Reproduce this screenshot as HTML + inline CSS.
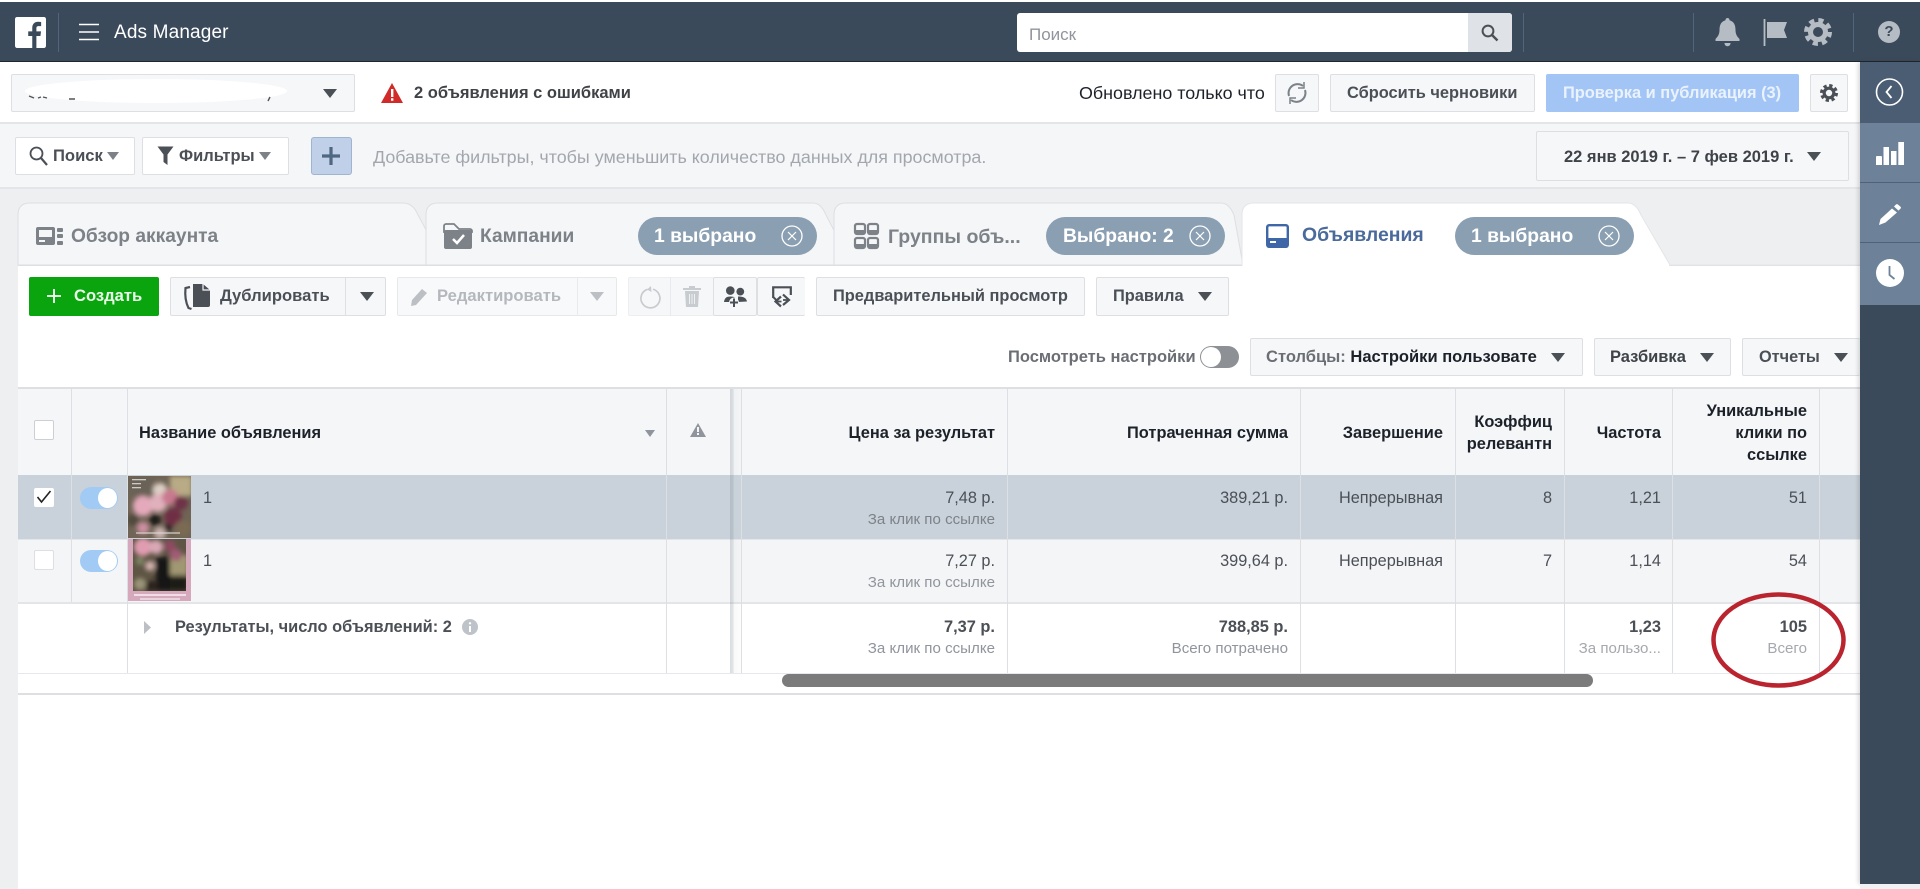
<!DOCTYPE html>
<html lang="ru"><head><meta charset="utf-8"><title>Ads Manager</title>
<style>
html,body{margin:0;padding:0;width:1920px;height:889px;overflow:hidden;background:#fff}
body{position:relative;font-family:"Liberation Sans",Arial,sans-serif;color:#4b4f56}
div,svg{position:absolute;box-sizing:border-box}
svg{display:block;overflow:visible}
.t{white-space:nowrap;line-height:20px;font-size:16px;transform:translateY(1px)}
.r{text-align:right}
.bd{font-weight:700}
.b{background:#f6f7f9;border:1px solid #dddfe2;border-radius:2px}
.a{width:0;height:0;border-left:7px solid transparent;border-right:7px solid transparent;border-top:9px solid #4b4f56}
.v{background:#dddfe2;width:1px}
.h{font-weight:700;color:#1d2129;font-size:16.4px}
.c{color:#4b4f56;font-size:16.3px}
.u{color:#90949c;font-size:15.1px}
.m{font-size:16.4px;color:#4b4f56}
.tb{font-weight:700;font-size:19.2px;color:#7d8288}
.pl{background:#8b9fb3;height:38px;top:217px;border-radius:19px}
.pt{color:#fff;font-weight:700;font-size:19.3px}
</style></head><body>

<!-- header -->
<div style="left:0;top:0;width:1920px;height:62px;background:#3b4a5a;border-top:2px solid #fff;border-bottom:1px solid #20262d"></div>
<svg style="left:15px;top:17px" width="31" height="31" viewBox="0 0 30 30"><rect width="30" height="30" rx="2" fill="#fff"/><path d="M20.7 30V18.4h3.9l.6-4.5h-4.5V11c0-1.3.4-2.2 2.2-2.2h2.4v-4a32 32 0 0 0-2.8-.2c-3.5 0-5.8 2.1-5.8 6v3.3h-3.9v4.5h3.9V30z" fill="#3b4a5a"/></svg>
<div style="left:58px;top:13px;width:1px;height:39px;background:#53657a"></div>
<svg style="left:79px;top:23px" width="20" height="18"><path d="M0 1.500h20M0 9h20M0 16.500h20" stroke="#fff" stroke-width="1.600"/></svg>
<div class="t" style="left:114px;top:22px;color:#fff;font-size:19px;letter-spacing:.15px">Ads Manager</div>
<div style="left:1017px;top:13px;width:495px;height:39px;background:#fff;border-radius:3px"></div>
<div style="left:1468px;top:13px;width:44px;height:39px;background:#dfe2e6;border-radius:0 3px 3px 0"></div>
<div class="t" style="left:1029px;top:24px;color:#90949c;font-size:17px">Поиск</div>
<svg style="left:1481px;top:24px" width="18" height="18"><circle cx="7" cy="7" r="5.400" fill="none" stroke="#4b4f56" stroke-width="2"/><path d="M11 11l5.500 5.500" stroke="#4b4f56" stroke-width="2.400"/></svg>
<div style="left:1523px;top:13px;width:1px;height:39px;background:#53657a"></div>
<div style="left:1693px;top:13px;width:1px;height:39px;background:#53657a"></div>
<div style="left:1853px;top:13px;width:1px;height:39px;background:#53657a"></div>
<svg style="left:1715px;top:18px" width="25" height="29" viewBox="0 0 25 29"><path d="M12.500 0c1.300 0 2 .9 2 2.200C19 3.500 20.500 7 20.500 12c0 4 1.500 6.500 4 9v2H.5v-2c2.500-2.500 4-5 4-9 0-5 1.500-8.500 6-9.800C10.500.9 11.200 0 12.500 0z" fill="#b6bcc4"/><path d="M9.500 25h6c0 2-1.300 3.200-3 3.200s-3-1.200-3-3.200z" fill="#b6bcc4"/></svg>
<svg style="left:1763px;top:19px" width="24" height="27" viewBox="0 0 24 27"><path d="M1.500 0v27" stroke="#b6bcc4" stroke-width="1.800"/><path d="M4 3h20l-3 8 3 8H4z" fill="#b6bcc4"/></svg>
<svg style="left:1804px;top:18px" width="28" height="28" viewBox="0 0 28 28"><circle cx="14" cy="14" r="11.500" fill="none" stroke="#b6bcc4" stroke-width="5" stroke-dasharray="5 4.030"/><circle cx="14" cy="14" r="7.500" fill="none" stroke="#b6bcc4" stroke-width="5"/></svg>
<div style="left:1878px;top:21px;width:22px;height:22px;border-radius:50%;background:#b6bcc4"></div>
<div class="t bd" style="left:1878px;top:21px;width:22px;text-align:center;color:#3b4a5a;font-size:15px">?</div>

<!-- account row -->
<div style="left:0;top:62px;width:1860px;height:62px;background:#fff;border-bottom:2px solid #e3e5e8"></div>
<div class="b" style="left:11px;top:74px;width:344px;height:38px"></div>
<svg style="left:25px;top:78px" width="262" height="26"><ellipse cx="131" cy="13" rx="131" ry="12" fill="#fff"/><path d="M4 18l5 2M13 20l3-1M18 19l4 1M44 21h6M245 19l-2 4" stroke="#555" stroke-width="1.400"/></svg>
<div class="a" style="left:323px;top:89px"></div>
<svg style="left:381px;top:83px" width="22" height="20" viewBox="0 0 22 20"><path d="M11 0l11 20H0z" fill="#d02b28"/><path d="M10 6h2.400v8H10zM10 15.200h2.400v2.500H10z" fill="#fff"/></svg>
<div class="t bd" style="left:414px;top:82px;font-size:16.5px;color:#3f4348">2 объявления с ошибками</div>
<div class="t" style="left:1079px;top:82px;color:#1d2129;font-size:17.9px">Обновлено только что</div>
<div class="b" style="left:1275px;top:74px;width:44px;height:38px"></div>
<svg style="left:1285px;top:81px" width="24" height="24" viewBox="0 0 24 24"><path d="M4 15A9 9 0 0 1 18 5M20 9a9 9 0 0 1-14 10" fill="none" stroke="#7d8288" stroke-width="2"/><path d="M19 1v6h-6M5 23v-6h6" fill="none" stroke="#7d8288" stroke-width="1.500"/></svg>
<div class="b" style="left:1330px;top:74px;width:205px;height:38px"></div>
<div class="t bd m" style="left:1347px;top:82px">Сбросить черновики</div>
<div style="left:1546px;top:74px;width:253px;height:38px;background:#a3c5f6;border-radius:2px"></div>
<div class="t bd" style="left:1563px;top:82px;font-size:16.4px;color:#eaf2fd">Проверка и публикация (3)</div>
<div class="b" style="left:1810px;top:74px;width:38px;height:38px"></div>
<svg style="left:1820px;top:84px" width="18" height="18" viewBox="0 0 28 28"><circle cx="14" cy="14" r="11.500" fill="none" stroke="#4b4f56" stroke-width="5" stroke-dasharray="5 4.030"/><circle cx="14" cy="14" r="7.500" fill="none" stroke="#4b4f56" stroke-width="5"/></svg>

<!-- filter row -->
<div style="left:0;top:124px;width:1860px;height:65px;background:#f5f6f8;border-bottom:2px solid #e3e5e8"></div>
<div class="b" style="left:15px;top:137px;width:120px;height:38px;background:#fff"></div>
<svg style="left:29px;top:146px" width="19" height="20"><circle cx="7.500" cy="7.500" r="6" fill="none" stroke="#4b4f56" stroke-width="1.800"/><path d="M12 12l6 7" stroke="#4b4f56" stroke-width="2.200"/></svg>
<div class="t bd" style="left:53px;top:145px;font-size:16.6px">Поиск</div>
<div class="a" style="left:107px;top:152px;border-left-width:6px;border-right-width:6px;border-top-width:8px;border-top-color:#7d8288"></div>
<div class="b" style="left:142px;top:137px;width:147px;height:38px;background:#fff"></div>
<svg style="left:157px;top:146px" width="17" height="19"><path d="M.5 .5h16L10.500 8.500V19l-4-3V8.500z" fill="#4b4f56"/></svg>
<div class="t bd" style="left:179px;top:145px;font-size:16.5px">Фильтры</div>
<div class="a" style="left:259px;top:152px;border-left-width:6px;border-right-width:6px;border-top-width:8px;border-top-color:#7d8288"></div>
<div style="left:311px;top:137px;width:41px;height:38px;background:#bfd0e8;border:1px solid #9fb4d0;border-radius:3px"></div>
<svg style="left:322px;top:147px" width="18" height="18"><path d="M9 0v18M0 9h18" stroke="#4f6782" stroke-width="3.200"/></svg>
<div class="t" style="left:373px;top:146px;color:#a3a7ad;font-size:17.9px">Добавьте фильтры, чтобы уменьшить количество данных для просмотра.</div>
<div class="b" style="left:1536px;top:131px;width:313px;height:50px"></div>
<div class="t bd" style="left:1564px;top:146px;color:#3f4348;font-size:16.5px">22 янв 2019 г. – 7 фев 2019 г.</div>
<div class="a" style="left:1807px;top:152px"></div>

<!-- tab area -->
<div style="left:0;top:189px;width:1860px;height:700px;background:#edeff1"></div>
<div style="left:18px;top:265px;width:1842px;height:624px;background:#fff;border-top:1px solid #dddfe2"></div>

<svg style="left:18px;top:203px" width="1842" height="63" viewBox="0 0 1842 63">
<path d="M0 62V12Q0 0 12 0H385Q395 0 400 12L427 62z" fill="#f5f6f8" stroke="#dddfe2"/>
<path d="M408 62V12Q408 0 420 0H795Q803 0 808 12L834 62z" fill="#f5f6f8" stroke="#dddfe2"/>
<path d="M816 62V12Q816 0 828 0H1203Q1211 0 1216 12L1225 62z" fill="#f5f6f8" stroke="#dddfe2"/>
<path d="M1224 63V12Q1224 0 1236 0H1610Q1618 0 1623 12L1652 62H1842" fill="#fff" stroke="#e3e5e8"/>
<path d="M1225 62.500H1651" stroke="#fff" stroke-width="2"/>
</svg>

<!-- tab 1 -->
<svg style="left:36px;top:226px" width="27" height="20" viewBox="0 0 27 20"><path d="M2 1h15a2 2 0 0 1 2 2v14a2 2 0 0 1-2 2H2a2 2 0 0 1-2-2V3a2 2 0 0 1 2-2z" fill="#7d8288"/><rect x="3" y="4" width="13" height="7" fill="#f5f6f8"/><rect x="3" y="14" width="6" height="2" fill="#f5f6f8"/><rect x="21" y="2" width="6" height="4" rx="1" fill="#7d8288"/><rect x="21" y="8" width="6" height="4" rx="1" fill="#7d8288"/><rect x="21" y="15" width="6" height="4" rx="1" fill="#7d8288"/></svg>
<div class="t tb" style="left:71px;top:226px">Обзор аккаунта</div>
<!-- tab 2 -->
<svg style="left:444px;top:224px" width="28" height="25" viewBox="0 0 28 25"><path d="M0 8V2a2 2 0 0 1 2-2h8l5 5h11a2 2 0 0 1 2 2v1z" fill="none" stroke="#7d8288" stroke-width="1.800"/><rect y="6" width="28" height="19" rx="2" fill="#7d8288"/><path d="M9 15l4 4 7-8" fill="none" stroke="#fff" stroke-width="2.500"/></svg>
<div class="t tb" style="left:480px;top:226px">Кампании</div>
<div class="pl" style="left:638px;width:179px"></div>
<div class="t pt" style="left:654px;top:226px">1 выбрано</div>
<svg style="left:781px;top:225px" width="22" height="22"><circle cx="11" cy="11" r="10" fill="none" stroke="#fff" stroke-width="1.300"/><path d="M7 7l8 8M15 7l-8 8" stroke="#fff" stroke-width="1.200"/></svg>
<!-- tab 3 -->
<svg style="left:854px;top:223px" width="25" height="26" viewBox="0 0 25 26"><g fill="none" stroke="#7d8288" stroke-width="2.200"><rect x="1" y="1" width="10" height="10" rx="2"/><rect x="14" y="1" width="10" height="10" rx="2"/><rect x="1" y="15" width="10" height="10" rx="2"/><rect x="14" y="15" width="10" height="10" rx="2"/></g><path d="M1 21h10v3H1zM14 21h10v3H14zM1 7h10v3H1zM14 7h10v3H14z" fill="#7d8288"/></svg>
<div class="t tb" style="left:888px;top:226px;font-size:19.5px">Группы объ...</div>
<div class="pl" style="left:1046px;width:179px"></div>
<div class="t pt" style="left:1063px;top:226px">Выбрано: 2</div>
<svg style="left:1189px;top:225px" width="22" height="22"><circle cx="11" cy="11" r="10" fill="none" stroke="#fff" stroke-width="1.300"/><path d="M7 7l8 8M15 7l-8 8" stroke="#fff" stroke-width="1.200"/></svg>
<!-- tab 4 -->
<svg style="left:1266px;top:224px" width="23" height="24" viewBox="0 0 23 24"><rect x="1.200" y="1.200" width="20.600" height="21.600" rx="2" fill="none" stroke="#3f67a8" stroke-width="2.400"/><rect x="1" y="14" width="21" height="9" rx="1" fill="#3f67a8"/><rect x="4" y="17" width="6" height="2" fill="#fff"/></svg>
<div class="t tb" style="left:1302px;top:224px;color:#4a6a9c;font-size:19.4px">Объявления</div>
<div class="pl" style="left:1455px;width:179px"></div>
<div class="t pt" style="left:1471px;top:226px">1 выбрано</div>
<svg style="left:1598px;top:225px" width="22" height="22"><circle cx="11" cy="11" r="10" fill="none" stroke="#fff" stroke-width="1.300"/><path d="M7 7l8 8M15 7l-8 8" stroke="#fff" stroke-width="1.200"/></svg>

<!-- toolbar -->
<div style="left:29px;top:277px;width:130px;height:39px;background:#0aa50e;border-radius:2px"></div>
<svg style="left:47px;top:289px" width="14" height="14"><path d="M7 0v14M0 7h14" stroke="#fff" stroke-width="1.800"/></svg>
<div class="t bd" style="left:74px;top:285px;color:#eaffea;font-size:16.6px">Создать</div>
<div class="b" style="left:170px;top:277px;width:216px;height:39px"></div>
<div class="v" style="left:345px;top:277px;height:39px"></div>
<svg style="left:184px;top:284px" width="27" height="25" viewBox="0 0 27 25"><path d="M9 0h10l7 6v15a2 2 0 0 1-2 2H9z" fill="#4b4f56"/><path d="M19 0v6h7" fill="none" stroke="#f6f7f9" stroke-width="1.200"/><path d="M6 3L1.500 4c-.8 8 0 14 3 20l3 1" fill="none" stroke="#4b4f56" stroke-width="2.200"/></svg>
<div class="t bd" style="left:220px;top:285px;font-size:16.6px;color:#4b4f56">Дублировать</div>
<div class="a" style="left:360px;top:292px"></div>
<div class="b" style="left:397px;top:277px;width:220px;height:39px;opacity:.7"></div>
<div style="left:577px;top:277px;width:1px;height:39px;background:#e8eaed"></div>
<svg style="left:410px;top:288px" width="18" height="18"><path d="M12 1l5 4L6 17l-5 1 1-6z" fill="#bcc0c4"/></svg>
<div class="t bd" style="left:437px;top:285px;font-size:16.6px;color:#b4b8bd">Редактировать</div>
<div class="a" style="left:590px;top:292px;border-top-color:#bcc0c4"></div>
<div style="left:628px;top:277px;width:86px;height:39px;background:#f6f7f9;border:1px solid #eceef0;border-radius:2px"></div>
<div style="left:670px;top:277px;width:1px;height:39px;background:#e8eaed"></div>
<svg style="left:640px;top:286px" width="20" height="22" viewBox="0 0 20 22"><path d="M7.500 3.300A9.500 9.500 0 1 0 13 3.200" fill="none" stroke="#c8cbcf" stroke-width="1.700"/><path d="M11 0L7 3.500l4.500 2.500z" fill="#c8cbcf"/></svg>
<svg style="left:683px;top:285px" width="18" height="22" viewBox="0 0 18 22"><path d="M0 4h18" stroke="#c8cbcf" stroke-width="2"/><path d="M6 3.500V1h6v2.500" fill="#c8cbcf"/><path d="M2 6h14l-1 16H3z" fill="#c8cbcf"/><path d="M6.500 9v10M9 9v10M11.500 9v10" stroke="#eef0f2"/></svg>
<div class="b" style="left:713px;top:277px;width:44px;height:39px"></div>
<div class="b" style="left:757px;top:277px;width:48px;height:39px;border-right:0"></div>
<svg style="left:724px;top:286px" width="23" height="22" viewBox="0 0 23 22"><circle cx="6.300" cy="4.600" r="4.300" fill="#4b4f56"/><circle cx="16.300" cy="5.600" r="3.900" fill="#4b4f56"/><path d="M0 16c.5-4 2.500-5.500 6.500-5.500s6 1.500 6.500 5.500z" fill="#4b4f56"/><path d="M14 10.500c5 0 8 1 9 5l-9 .5z" fill="#4b4f56"/><circle cx="10" cy="16.500" r="5" fill="#f6f7f9"/><path d="M10 12.500v8.500M6 16.500h8" stroke="#4b4f56" stroke-width="2"/></svg>
<svg style="left:772px;top:286px" width="20" height="22" viewBox="0 0 20 22"><path d="M1.200 12V1.300h17.600V9" fill="none" stroke="#4b4f56" stroke-width="2.200"/><path d="M1.200 11l4 4" stroke="#4b4f56" stroke-width="2"/><path d="M9 10.500l-5.500 5 5.500 5M11 8.500l6 5.500-6 5" fill="none" stroke="#4b4f56" stroke-width="2.200"/><path d="M4 15.500h5.500M11 14h6" stroke="#4b4f56" stroke-width="1.800"/></svg>
<div class="b" style="left:816px;top:277px;width:269px;height:39px"></div>
<div class="t bd m" style="left:833px;top:285px">Предварительный просмотр</div>
<div class="b" style="left:1096px;top:277px;width:133px;height:39px"></div>
<div class="t bd m" style="left:1113px;top:285px">Правила</div>
<div class="a" style="left:1198px;top:292px"></div>

<!-- view row -->
<div class="t bd" style="left:1008px;top:346px;font-size:16.5px;color:#6b6f75">Посмотреть настройки</div>
<div style="left:1200px;top:346px;width:39px;height:22px;border-radius:11px;background:#8d9095"></div>
<div style="left:1201px;top:347px;width:20px;height:20px;border-radius:50%;background:#fff"></div>
<div class="b" style="left:1250px;top:338px;width:333px;height:38px"></div>
<div class="t bd" style="left:1266px;top:346px;font-size:16.55px;color:#6b6f75">Столбцы: <span style="color:#1d2129">Настройки пользовате</span></div>
<div class="a" style="left:1551px;top:353px"></div>
<div class="b" style="left:1594px;top:338px;width:137px;height:38px"></div>
<div class="t bd" style="left:1610px;top:346px;font-size:16.5px;color:#3f4348">Разбивка</div>
<div class="a" style="left:1700px;top:353px"></div>
<div class="b" style="left:1742px;top:338px;width:118px;height:38px;border-right:0"></div>
<div class="t bd" style="left:1759px;top:346px;font-size:16.3px;color:#4b4f56">Отчеты</div>
<div class="a" style="left:1834px;top:353px"></div>

<!-- table rows -->
<div style="left:18px;top:387px;width:1842px;height:2px;background:#dddfe2"></div>
<div style="left:18px;top:389px;width:1842px;height:86px;background:#f5f6f8"></div>
<div style="left:18px;top:475px;width:1842px;height:64px;background:#c9d2da"></div>
<div style="left:18px;top:539px;width:1842px;height:63px;background:#f4f5f7;border-top:1px solid #e3e5e8"></div>
<div style="left:18px;top:602px;width:1842px;height:2px;background:#e3e5e8"></div>
<div style="left:18px;top:673px;width:1842px;height:1px;background:#e6e8eb"></div>
<div style="left:18px;top:693px;width:1842px;height:2px;background:#dddfe2"></div>

<!-- column lines -->
<div class="v" style="left:71px;top:389px;height:213px"></div>
<div class="v" style="left:127px;top:389px;height:284px"></div>
<div class="v" style="left:666px;top:389px;height:284px"></div>
<div class="v" style="left:1007px;top:389px;height:284px"></div>
<div class="v" style="left:1300px;top:389px;height:284px"></div>
<div class="v" style="left:1455px;top:389px;height:284px"></div>
<div class="v" style="left:1564px;top:389px;height:284px"></div>
<div class="v" style="left:1672px;top:389px;height:284px"></div>
<div class="v" style="left:1819px;top:389px;height:284px"></div>
<div style="left:730px;top:389px;width:11px;height:284px;background:linear-gradient(90deg,rgba(130,140,150,.3) 0,rgba(130,140,150,.22) 30%,rgba(200,205,210,.12) 36%,rgba(220,222,226,.05) 100%)"></div>
<div class="v" style="left:741px;top:389px;height:284px"></div>

<!-- header cells -->
<div style="left:34px;top:420px;width:20px;height:20px;background:#fff;border:1px solid #ccd0d5;border-radius:2px"></div>
<div class="t h" style="left:139px;top:422px">Название объявления</div>
<div class="a" style="left:645px;top:430px;border-left-width:5px;border-right-width:5px;border-top-width:7px;border-top-color:#90949c"></div>
<svg style="left:690px;top:423px" width="16" height="14"><path d="M8 0l8 14H0z" fill="#90949c"/><path d="M7 4h2v5H7zM7 10h2v2H7z" fill="#f5f6f8"/></svg>
<div class="t h r" style="right:925px;top:422px">Цена за результат</div>
<div class="t h r" style="right:632px;top:422px">Потраченная сумма</div>
<div class="t h r" style="right:477px;top:422px">Завершение</div>
<div class="t h r" style="right:368px;top:410px;line-height:22px">Коэффиц<br>релевантн</div>
<div class="t h r" style="right:259px;top:422px">Частота</div>
<div class="t h r" style="right:113px;top:399px;line-height:22px">Уникальные<br>клики по<br>ссылке</div>

<!-- row 1 -->
<div style="left:34px;top:488px;width:20px;height:19px;background:#fff;border-radius:2px"></div>
<svg style="left:36px;top:490px" width="16" height="14"><path d="M1.500 7l4 5L14.500 1" fill="none" stroke="#222" stroke-width="1.600"/></svg>
<div style="left:80px;top:487px;width:38px;height:22px;border-radius:11px;background:#a1cbf4"></div>
<div style="left:98px;top:488px;width:19px;height:20px;border-radius:50%;background:#fff"></div>
<svg style="left:128px;top:476px" width="63" height="62" viewBox="0 0 63 62"><defs><filter id="f1" x="-10%" y="-10%" width="120%" height="120%"><feGaussianBlur stdDeviation="2.300"/></filter><clipPath id="k1"><rect width="63" height="62"/></clipPath></defs><g clip-path="url(#k1)"><rect width="63" height="62" fill="#6f6455"/><g filter="url(#f1)"><rect x="42" y="0" width="22" height="20" fill="#b8ab85"/><rect x="0" y="0" width="26" height="20" fill="#6b6256"/><circle cx="32" cy="14" r="7" fill="#dccfc4"/><circle cx="15" cy="30" r="10" fill="#e4a9bb"/><circle cx="30" cy="27" r="9" fill="#e0b0bc"/><circle cx="42" cy="21" r="8" fill="#c9798f"/><circle cx="53" cy="27" r="7" fill="#6e3347"/><circle cx="45" cy="41" r="9" fill="#6f2f45"/><circle cx="5" cy="44" r="6" fill="#4f4a3c"/><circle cx="27" cy="44" r="6" fill="#1d1d17"/><circle cx="15" cy="52" r="6" fill="#cc8fa0"/><circle cx="55" cy="52" r="8" fill="#7a6a52"/><circle cx="32" cy="57" r="6" fill="#c9b0ae"/><circle cx="40" cy="52" r="4" fill="#2a221c"/></g><rect x="8" y="56" width="44" height="2" fill="#d9d4d0" opacity=".6"/><rect x="4" y="3" width="14" height="1.300" fill="#e6e6e6" opacity=".8"/><rect x="4" y="7" width="9" height="1.300" fill="#e6e6e6" opacity=".8"/><rect x="4" y="11" width="9" height="1.300" fill="#e6e6e6" opacity=".8"/></g></svg>
<div class="t c" style="left:203px;top:487px">1</div>
<div class="t c r" style="right:925px;top:487px">7,48 р.</div>
<div class="t u r" style="right:925px;top:509px;color:#7d8288">За клик по ссылке</div>
<div class="t c r" style="right:632px;top:487px">389,21 р.</div>
<div class="t c r" style="right:477px;top:487px">Непрерывная</div>
<div class="t c r" style="right:368px;top:487px">8</div>
<div class="t c r" style="right:259px;top:487px">1,21</div>
<div class="t c r" style="right:113px;top:487px">51</div>

<!-- row 2 -->
<div style="left:34px;top:550px;width:20px;height:20px;background:#fff;border:1px solid #dddfe2;border-radius:2px"></div>
<div style="left:80px;top:550px;width:38px;height:22px;border-radius:11px;background:#a1cbf4"></div>
<div style="left:98px;top:551px;width:19px;height:20px;border-radius:50%;background:#fff"></div>
<svg style="left:128px;top:539px" width="63" height="62" viewBox="0 0 63 62"><defs><filter id="f2" x="-10%" y="-10%" width="120%" height="120%"><feGaussianBlur stdDeviation="2.300"/></filter><clipPath id="k2"><rect x="5" width="53" height="52"/></clipPath></defs><rect width="63" height="62" fill="#d5a9bb"/><g clip-path="url(#k2)"><rect x="5" width="53" height="52" fill="#5e5544"/><g filter="url(#f2)"><rect x="42" y="16" width="18" height="20" fill="#a09872"/><circle cx="15" cy="8" r="9" fill="#e09cb0"/><circle cx="28" cy="8" r="7" fill="#d9a7b5"/><circle cx="42" cy="7" r="6" fill="#8e4a62"/><circle cx="48" cy="16" r="6" fill="#a05c74"/><circle cx="12" cy="22" r="4" fill="#7e8a64"/><circle cx="22" cy="27" r="5" fill="#d0b0ad"/><rect x="28" y="18" width="14" height="34" fill="#161212"/><circle cx="12" cy="45" r="6" fill="#9a9478"/><rect x="42" y="38" width="18" height="14" fill="#1e1a16"/><rect x="18" y="42" width="12" height="10" fill="#2a241e"/></g></g><rect x="6" y="55" width="52" height="2" fill="#f0dde5"/><rect x="12" y="59" width="40" height="2" fill="#e9d3dd"/></svg>
<div class="t c" style="left:203px;top:550px">1</div>
<div class="t c r" style="right:925px;top:550px">7,27 р.</div>
<div class="t u r" style="right:925px;top:572px">За клик по ссылке</div>
<div class="t c r" style="right:632px;top:550px">399,64 р.</div>
<div class="t c r" style="right:477px;top:550px">Непрерывная</div>
<div class="t c r" style="right:368px;top:550px">7</div>
<div class="t c r" style="right:259px;top:550px">1,14</div>
<div class="t c r" style="right:113px;top:550px">54</div>

<!-- summary -->
<svg style="left:144px;top:621px" width="7" height="13"><path d="M0 0l7 6.500L0 13z" fill="#bcc0c4"/></svg>
<div class="t bd m" style="left:175px;top:616px">Результаты, число объявлений: 2</div>
<div style="left:462px;top:619px;width:16px;height:16px;border-radius:50%;background:#bec3c9"></div>
<svg style="left:462px;top:619px" width="16" height="16"><path d="M8 7v6" stroke="#fff" stroke-width="2"/><circle cx="8" cy="4.300" r="1.200" fill="#fff"/></svg>
<div class="t bd m r" style="right:925px;top:616px">7,37 р.</div>
<div class="t u r" style="right:925px;top:638px">За клик по ссылке</div>
<div class="t bd m r" style="right:632px;top:616px">788,85 р.</div>
<div class="t u r" style="right:632px;top:638px">Всего потрачено</div>
<div class="t bd m r" style="right:259px;top:616px">1,23</div>
<div class="t u r" style="right:259px;top:638px;color:#a5a8ad">За пользо...</div>
<div class="t bd m r" style="right:113px;top:616px">105</div>
<div class="t u r" style="right:113px;top:638px;color:#a5a8ad">Всего</div>

<!-- scrollbar -->
<div style="left:782px;top:674px;width:811px;height:13px;border-radius:7px;background:#7b7b7b"></div>

<!-- red ellipse -->
<svg style="left:1710px;top:591px" width="138" height="98"><ellipse cx="68.500" cy="49" rx="65" ry="45.500" fill="none" stroke="#b9242f" stroke-width="4.500"/></svg>

<!-- right sidebar -->
<div style="left:1860px;top:62px;width:60px;height:822px;background:#3b4a5a;box-shadow:-2px 0 4px rgba(0,0,0,.15)"></div>
<div style="left:1860px;top:62px;width:60px;height:61px;background:#4a5d73"></div>
<div style="left:1860px;top:123px;width:60px;height:60px;background:#6d8299;border-bottom:1px solid #4f6278"></div>
<div style="left:1860px;top:183px;width:60px;height:60px;background:#6d8299;border-bottom:1px solid #4f6278"></div>
<div style="left:1860px;top:243px;width:60px;height:62px;background:#6d8299"></div>
<div style="left:1860px;top:884px;width:60px;height:5px;background:#f0f1f3"></div>
<svg style="left:1875px;top:78px" width="28" height="28"><circle cx="14.500" cy="14" r="13" fill="none" stroke="#fff" stroke-width="1.600"/><path d="M16.500 8l-5 6 5 6" fill="none" stroke="#fff" stroke-width="1.800"/></svg>
<svg style="left:1876px;top:142px" width="28" height="23"><path d="M0 15a1 1 0 0 1 1-1h4a1 1 0 0 1 1 1v8H0zM7.500 5h5.500v18H7.500zM15 9h5.500v14H15zM22.300 0H28v23h-5.700z" fill="#fff"/></svg>
<svg style="left:1879px;top:204px" width="22" height="21" viewBox="0 0 22 21"><path d="M13 4.500l5 4L6.500 18.500 0 21l1.500-6z" fill="#fff"/><path d="M15 2.500l2-2c.6-.5 1.300-.5 1.900 0l2.600 2.200c.6.600.6 1.300 0 1.900l-2 2z" fill="#fff"/></svg>
<svg style="left:1876px;top:259px" width="28" height="28"><circle cx="14" cy="14" r="14" fill="#fff"/><path d="M13.500 7v9l5 4" fill="none" stroke="#6d8299" stroke-width="1.800"/></svg>

</body></html>
